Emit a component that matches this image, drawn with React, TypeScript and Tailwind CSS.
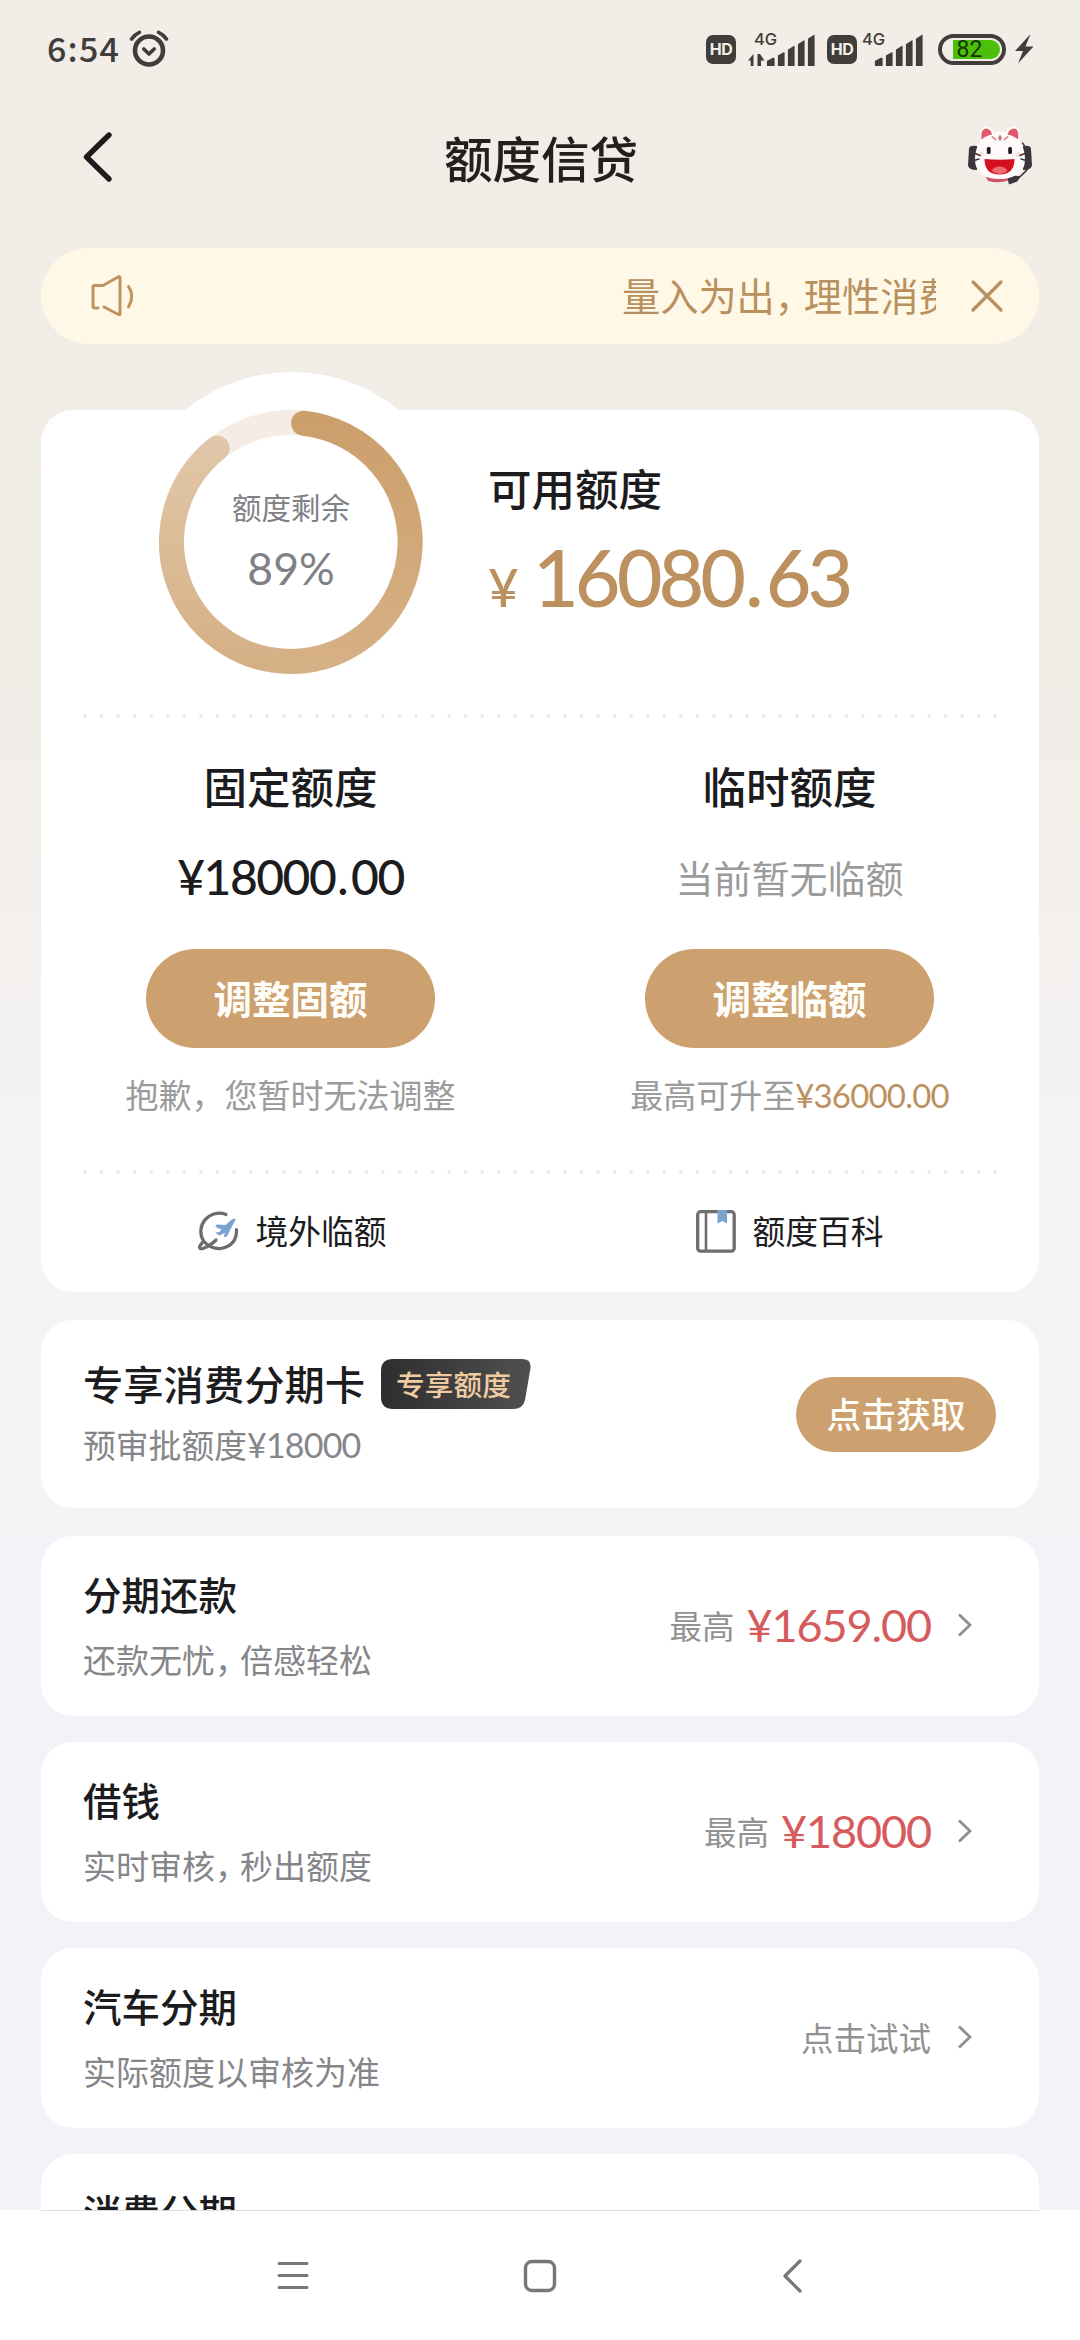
import type { ReactNode } from "react";

function AlarmIcon() {
  return (
    <svg width="40" height="38" viewBox="0 0 40 38" fill="none" stroke="#403d3a" strokeLinecap="round">
      <circle cx="20" cy="20.500" r="14" strokeWidth="4.600" />
      <path d="M14.800 19l5.200 5 5.200-5" strokeWidth="3.600" strokeLinejoin="round" />
      <path d="M2.600 9Q5.500 4.500 10.400 2.300M37.400 9Q34.500 4.500 29.600 2.300" strokeWidth="3.600" />
    </svg>
  );
}

function HdBadge() {
  return (
    <div className="flex h-[29px] w-[30px] items-center justify-center rounded-[7px] bg-[#403d3a] font-['Inter'] text-[16px] leading-none font-bold tracking-tight text-[#f2eee8]">
      HD
    </div>
  );
}

function Signal({ data }: { data?: boolean }) {
  return (
    <svg width="68" height="36" viewBox="0 0 68 36" fill="#403d3a">
      <text x="6" y="14" fontSize="16.500" fontFamily="Inter, sans-serif" fontWeight="500">4G</text>
      {data && <path d="M5.500 23v12H2.700v-5.500H0L5.500 23zM9.500 35V23h2.500l4.500 6.500h-3.500V35z" />}
      <path d="M19.500 35v-4l5.500-3h1v7zM30.500 35V25.500l5.500-3V35zM40.500 35V19.500l5.500-3.500v19zM50.500 35V14l5.500-3.500V35zM60.500 35V8.500L66 5v30z" strokeWidth="1.200" stroke="#403d3a" strokeLinejoin="round" transform="translate(0 -.6)" />
    </svg>
  );
}

function Battery() {
  return (
    <div className="flex h-[31px] w-[68px] items-center justify-center rounded-full border-[4.500px] border-[#403d3a]">
      <div className="ml-[8px] flex h-[19px] w-[47px] items-center rounded-l-[3px] rounded-r-full bg-[#4cbf08] pl-[4px] font-['Roboto'] text-[23px] leading-none text-[#153509]">
        82
      </div>
    </div>
  );
}

function BoltIcon() {
  return (
    <svg width="20" height="30" viewBox="0 0 20 30" fill="#403d3a">
      <path d="M16.500 0L1 17h8L4 29.500 19.500 12.500H11.500z" />
    </svg>
  );
}

function MascotIcon() {
  return (
    <svg width="80" height="80" viewBox="0 0 80 80">
      <path d="M17 31q-8-1-8 3l-1 16q0 5 9 5zM63 31q8-1 8 3l1 16q0 5-9 5z" fill="#38373b" />
      <path d="M26 62h24v3q-11 4-22 1z" fill="#cf5666" />
      <path d="M21 26Q18 13 26 11q5 0 8 6.500 6-1.500 12 0 3-6.500 8-6.500 8 2 5 15 6 7 6 18 0 20-25 20T15 44q0-11 6-18z" fill="#fdfaf9" />
      <path d="M21.500 24.500Q20.500 14 26 13.500q5 .5 6 6-6 1-10.500 5zM58 24.500Q59.500 14 54 13.500q-5 .5-6.500 6 6 1 10.500 5z" fill="#df5a6e" />
      <path d="M40 19.500l2 3.500-2 3.500-2-3.500z" fill="#c9707a" />
      <path d="M32.500 22l3 2.500M47.500 22l-3 2.500" stroke="#d9949a" strokeWidth="2" strokeLinecap="round" />
      <rect x="26.800" y="32" width="3.800" height="7" rx="1.500" fill="#1d1c1f" />
      <rect x="48.200" y="32" width="3.800" height="7" rx="1.500" fill="#1d1c1f" />
      <circle cx="21" cy="39.500" r="2.500" fill="#f9dcda" />
      <circle cx="58.500" cy="39.500" r="2.500" fill="#f9dcda" />
      <path d="M24.500 44q15 1.500 30 0 0 15.500-15 15.500T24.500 44z" fill="#d3101f" />
      <path d="M31.500 56q2-4.500 8-4.500t8 4.500q-8 6-16 0z" fill="#e96a70" />
      <path d="M14 38l6 2.500M14 45.500l5-1.500M66 38l-6 2.500M66 45.500l-5-1.500M62.500 28q4 5 4 9M69 52q-4 6-12 12" fill="none" stroke="#38373b" strokeWidth="1.400" strokeLinecap="round" />
      <path d="M48.500 64l7-2.500 4 .5-3 4-7 2.500z" fill="#38373b" stroke="#38373b" strokeWidth="1.500" strokeLinejoin="round" />
    </svg>
  );
}

function SpeakerIcon() {
  return (
    <svg width="46" height="44" viewBox="0 0 46 44" fill="none" stroke="#bf935f" strokeWidth="3" strokeLinecap="round" strokeLinejoin="round">
      <path d="M7 34H3.500Q2 34 2 32.500V13q0-1.500 1.500-1.500H12L27.500 2.800q1.500-.8 1.500 1V39.500q0 1.800-1.500 1L13 33" />
      <path d="M37.500 12.500Q44 22 37.500 33" />
    </svg>
  );
}

// the sweep darkens towards its start, so each half gets its own vertical gradient
function QuotaRing() {
  return (
    <svg className="block" width="264" height="264" viewBox="0 0 264 264" fill="none">
      <defs>
        <linearGradient id="ring-left" gradientUnits="userSpaceOnUse" x1="0" y1="252" x2="0" y2="30">
          <stop offset="0" stopColor="#d6b085" />
          <stop offset="1" stopColor="#e0c7a9" />
        </linearGradient>
        <linearGradient id="ring-right" gradientUnits="userSpaceOnUse" x1="0" y1="12" x2="0" y2="252">
          <stop offset="0" stopColor="#cc9f6c" />
          <stop offset="1" stopColor="#d6b085" />
        </linearGradient>
      </defs>
      <circle cx="132" cy="132" r="119.500" stroke="#f5ece5" strokeWidth="25" />
      <path d="M132 251.500A119.500 119.500 0 0 1 58.100 38.100" stroke="url(#ring-left)" strokeWidth="25" strokeLinecap="round" />
      <path d="M144.500 13.200A119.500 119.500 0 0 1 132 251.500" stroke="url(#ring-right)" strokeWidth="25" strokeLinecap="round" />
    </svg>
  );
}

function DottedLine() {
  return (
    <svg className="ml-[42px] block" width="918" height="4" viewBox="0 0 918 4">
      <line x1="2" y1="2" x2="917" y2="2" stroke="#e8e8e8" strokeWidth="3.400" strokeLinecap="round" strokeDasharray="0.100 16.450" />
    </svg>
  );
}

function PlaneIcon() {
  return (
    <svg width="42" height="42" viewBox="0 0 42 42" fill="none" strokeLinecap="round">
      <path d="M29 4.500A18.300 18.300 0 0 0 6.500 31L2.500 36.500Q2 39.500 6 38.500 13 36 19 30" stroke="#6c6c70" strokeWidth="3.200" strokeLinejoin="round" />
      <path d="M6.500 31Q14 39.500 24 38.500 40 35.500 39.500 19.500" stroke="#6c6c70" strokeWidth="3.200" />
      <path d="M38 9.500Q36 9 34 11L29 15.500 20 15l-1 1.500 6.500 3L23 22.500l-3.500.5 2.500 1.500.5.500L29 21.500l-1.500 5 2-.5 4-8z" fill="#7ba3d0" stroke="#7ba3d0" strokeWidth="1.200" strokeLinejoin="round" />
    </svg>
  );
}

function BookIcon() {
  return (
    <svg width="40" height="43" viewBox="0 0 40 43" fill="none">
      <rect x="1.700" y="1.700" width="36.500" height="39.500" rx="3" stroke="#6f6d6f" strokeWidth="3.300" />
      <path d="M10 2v39" stroke="#6f6d6f" strokeWidth="2.600" />
      <path d="M21.500 0h9.500v13.500l-4.700-2.500-4.800 2.500z" fill="#7ba3d0" />
    </svg>
  );
}

function ChevronRight() {
  return (
    <svg width="16" height="26" viewBox="0 0 16 26" fill="none" stroke="#8f8f8f" strokeWidth="2.800">
      <path d="M2 2.500L13 13 2 23.500" />
    </svg>
  );
}

// full-width comma sits tighter than the other glyphs
function Comma() {
  return <span className="tracking-[-0.240em]">，</span>;
}

function LimitColumn({ title, value, action, note }: { title: string; value: ReactNode; action: string; note: ReactNode }) {
  return (
    <div className="flex flex-1 flex-col items-center">
      <h3 className="mt-[43px] h-[50px] text-[43.500px] leading-[50px] font-medium text-[#1c1c1e]">{title}</h3>
      <div className="mt-[41px] h-[50px] text-[38px] leading-[50px] text-[#9b9b9b]">{value}</div>
      <button className="mt-[47px] h-[99px] w-[289px] rounded-full bg-[#cca06f] pb-[2px] text-[38.500px] leading-[97px] font-bold text-[#fffdf8]">
        {action}
      </button>
      <p className="mt-[26px] h-[40px] text-[33px] leading-[40px] text-[#9b9b9b]">{note}</p>
    </div>
  );
}

type Service = { title: string; desc: ReactNode; amount?: string; hint: string };

const services: Service[] = [
  { title: "分期还款", desc: <>还款无忧<Comma />倍感轻松</>, hint: "最高", amount: "¥1659.00" },
  { title: "借钱", desc: <>实时审核<Comma />秒出额度</>, hint: "最高", amount: "¥18000" },
  { title: "汽车分期", desc: "实际额度以审核为准", hint: "点击试试" },
];

function ServiceCard({ service }: { service: Service }) {
  return (
    <div className="flex h-[180px] shrink-0 items-center justify-between rounded-[32px] bg-white pr-[66px] pb-[3px] pl-[42px]">
      <div>
        <h3 className="text-[38.500px] leading-[50px] font-medium text-[#1c1c1e]">{service.title}</h3>
        <p className="mt-[18px] text-[33px] leading-[46px] text-[#85868a]">{service.desc}</p>
      </div>
      <div className="flex items-center">
        <span className="text-[32.500px] leading-[40px] text-[#929292]">{service.hint}</span>
        {service.amount && (
          <span className="ml-[12px] font-['Lato'] text-[45px] leading-[50px] tracking-[-1.100px] text-[#d55b5d]">{service.amount}</span>
        )}
        <span className="ml-[26px]"><ChevronRight /></span>
      </div>
    </div>
  );
}

export default function App() {
  return (
    <div
      className="flex h-[2340px] w-[1080px] flex-col overflow-hidden font-['Noto_Sans_CJK_SC',sans-serif]"
      style={{ background: "linear-gradient(#f2eee7 0, #f0ece6 680px, #f3efec 880px, #f4f4f4 1150px, #f4f4f4 1536px, #f2f3f8 1537px)" }}
    >
      {/* Status bar */}
      <div className="flex h-[98px] shrink-0 items-center pr-[46px] pl-[47px]">
        <span className="w-[82px] pb-[2px] text-[34px] leading-none font-medium tracking-[1.200px] text-[#403d3a]">6:54</span>
        <AlarmIcon />
        <div className="ml-auto flex items-center">
          <HdBadge />
          <span className="ml-[12px]"><Signal data /></span>
          <span className="ml-[11px]"><HdBadge /></span>
          <span className="-ml-[1px]"><Signal /></span>
          <span className="ml-[14px]"><Battery /></span>
          <span className="ml-[8px]"><BoltIcon /></span>
        </div>
      </div>

      {/* Title bar */}
      <header className="flex h-[120px] shrink-0 items-center justify-between pr-[40px] pb-[3px] pl-[82px]">
        <svg width="78" height="52" viewBox="0 0 78 52" fill="none" stroke="#1f1a1c" strokeWidth="5.400" strokeLinecap="round" strokeLinejoin="round">
          <path d="M27 4L4.500 26 27 48" />
        </svg>
        <h1 className="ml-[-38px] text-[48.500px] leading-[60px] font-medium text-[#221f1e]">额度信贷</h1>
        <div className="-mt-[3px]"><MascotIcon /></div>
      </header>

      {/* Notice */}
      <div className="mx-[41px] mt-[30px] flex h-[96px] shrink-0 items-center rounded-full bg-[#fff8e7] pl-[50px]">
        <SpeakerIcon />
        <div className="ml-[485px] w-[314px] overflow-hidden pb-[2px] text-[38.200px] leading-[50px] whitespace-nowrap text-[#b9905f]">
          量入为出<Comma />理性消费
        </div>
        <svg className="ml-[34px]" width="34" height="34" viewBox="0 0 34 34" stroke="#b9905f" strokeWidth="3.300" strokeLinecap="round">
          <path d="M3 3l28 28M31 3L3 31" />
        </svg>
      </div>

      {/* Quota card */}
      <section className="relative mx-[41px] mt-[66px] h-[882px] shrink-0 rounded-[32px] bg-white">
        <div className="absolute -top-[38px] left-[81px] size-[340px] rounded-full bg-white" />
        <div className="relative flex h-[304px]">
          <div className="ml-[118px] grid size-[264px]">
            <div className="col-start-1 row-start-1"><QuotaRing /></div>
            <div className="col-start-1 row-start-1 flex flex-col items-center pt-[76px] text-[#808185]">
              <span className="text-[29.500px] leading-[40px]">额度剩余</span>
              <span className="mt-[17px] font-['Lato'] text-[44.500px] leading-[50px]">89%</span>
            </div>
          </div>
          <div className="ml-[65px] pt-[53px]">
            <h2 className="text-[43.500px] leading-[50px] font-medium text-[#1c1c1e]">可用额度</h2>
            <div className="mt-[19px] flex items-baseline text-[#bd915f]">
              <span className="w-[45px] font-['Lato'] text-[53px] leading-[90px] font-medium">¥</span>
              <span className="font-['Lato'] text-[79px] leading-[90px] font-medium tracking-[-4px]">
                16080<span className="mr-[6px] ml-[3px]">.</span>63
              </span>
            </div>
          </div>
        </div>
        <DottedLine />
        <div className="flex h-[452px]">
          <LimitColumn
            title="固定额度"
            value={
              <span className="font-['Lato'] text-[48px] font-medium tracking-[-1.500px] text-[#1c1c1e]">
                ¥18000<span className="mr-[4px] ml-[2px]">.</span>00
              </span>
            }
            action="调整固额"
            note="抱歉，您暂时无法调整"
          />
          <LimitColumn
            title="临时额度"
            value="当前暂无临额"
            action="调整临额"
            note={<>最高可升至<span className="font-['Lato'] text-[33px] tracking-[-0.800px] text-[#bd915f]">¥36000.00</span></>}
          />
        </div>
        <DottedLine />
        <div className="flex h-[116px] items-center pb-[2px] pl-[2px] text-[32.800px] leading-[40px] text-[#1c1c1e]">
          <div className="flex flex-1 items-center justify-center gap-[16px]"><PlaneIcon /><span className="pb-[2px]">境外临额</span></div>
          <div className="flex flex-1 items-center justify-center gap-[16px]"><BookIcon /><span className="pb-[2px]">额度百科</span></div>
        </div>
      </section>

      {/* Installment card */}
      <section className="mx-[41px] mt-[28px] flex h-[188px] shrink-0 items-center justify-between rounded-[32px] bg-white pr-[43px] pl-[42px]">
        <div className="pb-[2px]">
          <div className="flex items-center">
            <h3 className="pb-[2px] text-[40.300px] leading-[50px] font-medium text-[#1c1c1e]">专享消费分期卡</h3>
            <div className="ml-[16px] grid h-[50px] w-[150px]">
              <svg className="col-start-1 row-start-1" width="150" height="50" viewBox="0 0 150 50">
                <defs>
                  <linearGradient id="tag"><stop stopColor="#2e2e30" /><stop offset="1" stopColor="#505050" /></linearGradient>
                </defs>
                <path d="M12 0H141Q150.500 0 149.500 9L144 41Q142 50 132 50H12Q0 50 0 38V12Q0 0 12 0z" fill="url(#tag)" />
              </svg>
              <span className="col-start-1 row-start-1 pl-[15px] text-[28.700px] leading-[49px] font-medium text-[#efcba0]">专享额度</span>
            </div>
          </div>
          <p className="mt-[11px] text-[32.800px] leading-[46px] text-[#85868a]">
            预审批额度<span className="font-['Lato'] text-[34px] tracking-[-0.800px]">¥18000</span>
          </p>
        </div>
        <button className="h-[75px] w-[200px] rounded-full bg-[#cca06f] pb-[2px] text-[34.800px] leading-[73px] font-medium text-[#fffdf8]">点击获取</button>
      </section>

      {/* Services, the last one runs under the navigation bar */}
      <div className="mx-[41px] mt-[28px] flex h-[674px] shrink-0 flex-col gap-[26px] overflow-hidden">
        {services.map((s) => <ServiceCard key={s.title} service={s} />)}
        <div className="h-[180px] shrink-0 rounded-[32px] bg-white pt-[32px] pl-[42px]">
          <h3 className="text-[38.500px] leading-[50px] font-medium text-[#1c1c1e]">消费分期</h3>
        </div>
      </div>

      {/* Navigation bar */}
      <nav className="h-[130px] shrink-0 bg-white">
        <div className="mx-[41px] h-px bg-[#dededf]" />
        <div className="flex h-[129px] items-center justify-between px-[276px]">
          <svg width="34" height="32" viewBox="0 0 34 32" stroke="#777" strokeWidth="3" strokeLinecap="round">
            <path d="M3 3.500h28M3 15.500h28M3 27.500h28" />
          </svg>
          <svg className="ml-[-10px]" width="34" height="34" viewBox="0 0 34 34" fill="none" stroke="#777" strokeWidth="3.400">
            <rect x="2.500" y="2.500" width="29" height="29" rx="6.500" />
          </svg>
          <svg width="24" height="36" viewBox="0 0 24 36" fill="none" stroke="#777" strokeWidth="3.200" strokeLinecap="round" strokeLinejoin="round">
            <path d="M20 3L5 18l15 15" />
          </svg>
        </div>
      </nav>
    </div>
  );
}
